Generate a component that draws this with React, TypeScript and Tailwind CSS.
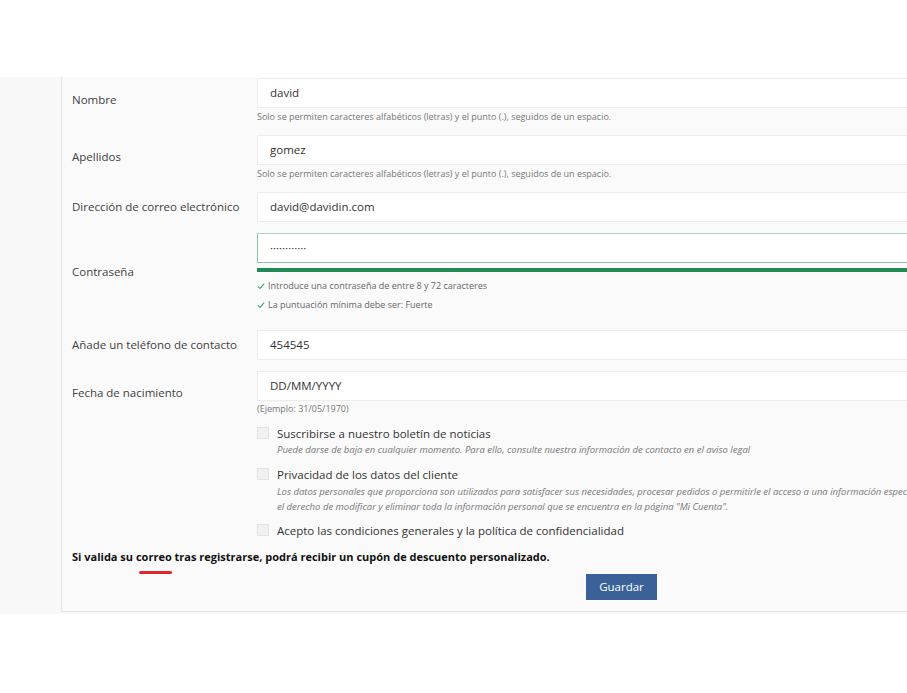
import React from "react";

const font = { fontFamily: "'Open Sans', 'Noto Sans', sans-serif" };

function Row({
  label,
  children,
  className = "",
}: {
  label: string;
  children: React.ReactNode;
  className?: string;
}) {
  return (
    <div className={`flex items-center ${className}`}>
      <div className="w-[195px] shrink-0 pl-[10px] text-[11.5px] text-[#414141]">{label}</div>
      <div className="flex-1 min-w-0">{children}</div>
    </div>
  );
}

function Input({ value, green = false }: { value: string; green?: boolean }) {
  return (
    <div
      className={`h-[30px] flex items-center pl-3 bg-white text-[11.5px] text-[#333] border ${
        green ? "border-[#8cc4a6] border-t-[#a9d6bd]" : "border-[#ececec]"
      }`}
    >
      {value}
    </div>
  );
}

function Help({ children }: { children: React.ReactNode }) {
  return <p className="mt-[3px] text-[9px] leading-[11px] text-[#777]">{children}</p>;
}

function Check({ children }: { children: React.ReactNode }) {
  return (
    <p className="flex items-center gap-[3px] text-[9px] leading-[12px] text-[#666]">
      <svg width="8" height="8" viewBox="0 0 10 10" fill="none">
        <path d="M1 5.5 L3.8 8 L9 2" stroke="#3aa56d" strokeWidth="1.3" />
      </svg>
      {children}
    </p>
  );
}

function Box({
  label,
  children,
  className = "",
}: {
  label: string;
  children?: React.ReactNode;
  className?: string;
}) {
  return (
    <div className={`flex ${className}`}>
      <div className="w-[12px] h-[12px] mt-[1px] border border-[#e2e2e2] bg-[#f1f1f1] shrink-0" />
      <div className="ml-[8px]">
        <p className="text-[11.5px] text-[#333] leading-[15px]">{label}</p>
        {children}
      </div>
    </div>
  );
}

export default function App() {
  return (
    <div className="w-[907px] h-[693px] overflow-hidden bg-white" style={font}>
      <div className="h-[77px]" />
      <div className="bg-[#f8f8f8] pl-[61px] pb-[2px]">
        <div className="w-[1000px] bg-[#fafafa] border-l border-b border-[#e6e6e6] pt-[1px] pb-[11px]">
          <Row label="Nombre" className="mb-[13px]">
            <Input value="david" />
            <Help>Solo se permiten caracteres alfabéticos (letras) y el punto (.), seguidos de un espacio.</Help>
          </Row>
          <Row label="Apellidos" className="mb-[13px]">
            <Input value="gomez" />
            <Help>Solo se permiten caracteres alfabéticos (letras) y el punto (.), seguidos de un espacio.</Help>
          </Row>
          <Row label="Dirección de correo electrónico" className="mb-[11px]">
            <Input value="david@davidin.com" />
          </Row>
          <Row label="Contraseña" className="mb-[19px]">
            <Input value="············" green />
            <div className="mt-[5px] h-[4px] bg-[#1f8a54]" />
            <div className="mt-[8px] flex flex-col gap-[7px]">
              <Check>Introduce una contraseña de entre 8 y 72 caracteres</Check>
              <Check>La puntuación mínima debe ser: Fuerte</Check>
            </div>
          </Row>
          <Row label="Añade un teléfono de contacto" className="mb-[11px]">
            <Input value="454545" />
          </Row>
          <Row label="Fecha de nacimiento" className="mb-[12px]">
            <Input value="DD/MM/YYYY" />
            <p className="mt-[2px] text-[9px] leading-[11px] text-[#777]">(Ejemplo: 31/05/1970)</p>
          </Row>
          <div className="pl-[195px] flex flex-col">
            <Box label="Suscribirse a nuestro boletín de noticias">
              <p className="mt-[3px] text-[9.5px] leading-[12px] italic text-[#777]">
                Puede darse de baja en cualquier momento. Para ello, consulte nuestra información de contacto en el aviso legal
              </p>
            </Box>
            <Box label="Privacidad de los datos del cliente" className="mt-[11px]">
              <p className="mt-[2px] text-[9.5px] italic text-[#777] leading-[15px] whitespace-nowrap">
                Los datos personales que proporciona son utilizados para satisfacer sus necesidades, procesar pedidos o permitirle el acceso a una información específica. Tiene
                <br />
                el derecho de modificar y eliminar toda la información personal que se encuentra en la página "Mi Cuenta".
              </p>
            </Box>
            <Box label="Acepto las condiciones generales y la política de confidencialidad" className="mt-[9px]" />
          </div>
          <p className="mt-[11px] pl-[10px] text-[11px] leading-[15px] font-bold text-[#111]">
            Si valida su{" "}
            <span className="relative">
              correo
              <span className="absolute left-[3px] right-[0px] -bottom-[10px] h-[3px] bg-[#e3262d] rounded" />
            </span>{" "}
            tras registrarse, podrá recibir un cupón de descuento personalizado.
          </p>
          <div className="mt-[10px] pl-[524px]">
            <button className="w-[71px] h-[26px] bg-[#3a6299] text-white text-[11.5px] block">Guardar</button>
          </div>
        </div>
      </div>
    </div>
  );
}
